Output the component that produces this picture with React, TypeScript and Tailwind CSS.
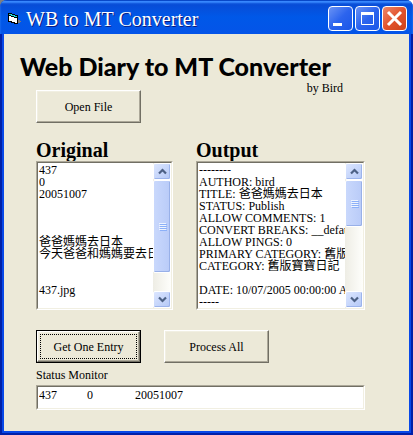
import { ReactNode } from "react";
import clsx from "clsx";

const originalText = `437
0
20051007



爸爸媽媽去日本
今天爸爸和媽媽要去日本


437.jpg`;

const outputText = `--------
AUTHOR: bird
TITLE: 爸爸媽媽去日本
STATUS: Publish
ALLOW COMMENTS: 1
CONVERT BREAKS: __default__
ALLOW PINGS: 0
PRIMARY CATEGORY: 舊版寶寶日記
CATEGORY: 舊版寶寶日記

DATE: 10/07/2005 00:00:00 AM
-----`;

const statusText = "437" + " ".repeat(10) + "0" + " ".repeat(14) + "20051007";

const sunken =
  "border border-t-[#aca899] border-l-[#aca899] border-r-white border-b-white bg-white";
const sunkenInner =
  "border border-t-[#716f64] border-l-[#716f64] border-r-[#f1efe2] border-b-[#f1efe2]";

const AppIcon = () => (
  <svg width="15" height="14" viewBox="0 0 15 14" shapeRendering="crispEdges">
    <path d="M11 8h2v1h1v1h-1v1h-2z" fill="#7b7b7b" />
    <path d="M1 1h4v1h3v1h3v9H7v-1H4v-1H1z" fill="#000" />
    <path d="M2 2h3v1h3v1h2v1H7V4H4V3H2z" fill="#1fd8d8" />
    <path d="M2 4h2v1h3v1h3v5H8v-1H5V9H2z" fill="#fff" />
  </svg>
);

const CaptionButton = ({
  label,
  close,
  children,
}: {
  label: string;
  close?: boolean;
  children: ReactNode;
}) => (
  <button
    type="button"
    aria-label={label}
    className={clsx(
      "flex size-[25px] items-center justify-center rounded-[4px] border border-white",
      close
        ? "bg-linear-to-br from-[#ec8668] via-[#e2522c] to-[#cc4218]"
        : "bg-linear-to-br from-[#6a92f4] via-[#2c64ee] to-[#1a56e8]"
    )}
  >
    <svg width="23" height="23" viewBox="0 0 23 23" fill="none">
      {children}
    </svg>
  </button>
);

const PushButton = ({
  children,
  focused,
}: {
  children: ReactNode;
  focused?: boolean;
}) => (
  <button
    type="button"
    className={clsx(
      "flex h-[33px] w-[105px] bg-[#ece9d8] text-xs",
      focused && "border border-black"
    )}
  >
    <span
      className={clsx(
        "flex size-full border border-t-white border-l-white border-r-[#716f64] border-b-[#716f64] shadow-[inset_-1px_-1px_0_#aca899,inset_1px_1px_0_#f1efe2]",
        focused && "p-[2px]"
      )}
    >
      <span
        className={clsx(
          "flex flex-1 items-center justify-center",
          focused && "border border-dotted border-black"
        )}
      >
        {children}
      </span>
    </span>
  </button>
);

const ScrollArrow = ({ down }: { down?: boolean }) => (
  <button
    type="button"
    aria-label={down ? "Scroll down" : "Scroll up"}
    className="flex h-[17px] w-full shrink-0 items-center justify-center rounded-[2px] border border-white bg-linear-to-br from-[#dce6ff] to-[#b4c8f6] shadow-[inset_-1px_-1px_0_#9cb4ec]"
  >
    <svg width="9" height="7" viewBox="0 0 9 7" fill="none">
      <path
        d={down ? "M1 1.5l3.5 3.5L8 1.5" : "M1 5.5L4.5 2L8 5.5"}
        stroke="#4d6185"
        strokeWidth="2.2"
      />
    </svg>
  </button>
);

const ScrollBar = ({ thumb }: { thumb: number }) => (
  <div className="flex w-[18px] shrink-0 flex-col bg-linear-to-r from-[#eeede5] to-[#fefefb]">
    <ScrollArrow />
    <div className="min-h-0 flex-1">
      <div
        style={{ height: `${thumb}%` }}
        className="flex flex-col items-center justify-center gap-px rounded-[2px] border border-white bg-linear-to-r from-[#c9d8fc] to-[#b9cbf8] shadow-[inset_-1px_-1px_0_#98b0e8]"
      >
        {[0, 1, 2, 3].map((i) => (
          <span
            key={i}
            className="h-px w-[7px] bg-[#eef4fe] shadow-[1px_1px_0_#8cb0f8]"
          />
        ))}
      </div>
    </div>
    <ScrollArrow down />
  </div>
);

const TextPanel = ({
  id,
  title,
  text,
  thumb,
}: {
  id: string;
  title: string;
  text: string;
  thumb: number;
}) => (
  <div className="flex min-w-0 flex-col">
    <label htmlFor={id} className="text-xl leading-[22px] font-bold">
      {title}
    </label>
    <div className={sunken}>
      <div className={clsx("flex", sunkenInner)}>
        <textarea
          id={id}
          rows={12}
          wrap="off"
          defaultValue={text}
          className="block min-w-0 flex-1 resize-none overflow-hidden pt-px pl-px text-xs leading-[12px] whitespace-pre outline-none"
        />
        <ScrollBar thumb={thumb} />
      </div>
    </div>
  </div>
);

const App = () => {
  return (
    <div className="bg-linear-to-r from-[#7f7f7f] to-white font-['Liberation_Serif','Noto_Sans_CJK_TC',serif] text-black">
      <div className="flex min-h-screen flex-col overflow-hidden rounded-t-[7px] bg-[#0842d8]">
        <header className="flex h-[34px] shrink-0 items-center justify-between bg-linear-to-b from-[#0a48d0] via-[#0058e8] to-[#0454e8] pt-[3px] pr-1.5 pl-[7px] shadow-[inset_0_1px_0_#0848c8,inset_0_3px_2px_#3a8cff]">
          <div className="flex items-center gap-1">
            <AppIcon />
            <h1 className="text-xl leading-6 text-white [text-shadow:1px_1px_0_#0a1c80]">
              WB to MT Converter
            </h1>
          </div>
          <div className="flex gap-0.5">
            <CaptionButton label="Minimize">
              <path d="M4 17.5h9" stroke="#fff" strokeWidth="3" />
            </CaptionButton>
            <CaptionButton label="Maximize">
              <path d="M5 6.5h13" stroke="#fff" strokeWidth="3" />
              <path d="M5.5 6v11.5h12V6" stroke="#fff" />
            </CaptionButton>
            <CaptionButton label="Close" close>
              <path d="M5 5l13 13M18 5L5 18" stroke="#fff" strokeWidth="3" />
            </CaptionButton>
          </div>
        </header>

        <div className="flex flex-1 border-x-2 border-b-2 border-[#0020a8] bg-[#0848e8] px-0.5 pb-0.5">
          <main className="flex flex-1 flex-col bg-[#ece9d8] pt-4 pr-11 pb-5 pl-8">
            <h2 className="-ml-4 font-['Lato',sans-serif] text-[25px] leading-8 font-black whitespace-nowrap">
              Web Diary to MT Converter
            </h2>
            <div className="flex items-start justify-between pr-[22px]">
              <div className="pt-2">
                <PushButton>Open File</PushButton>
              </div>
              <p className="text-xs leading-[12px]">by Bird</p>
            </div>

            <div className="mt-4 grid grid-cols-[137fr_169fr] gap-[23px]">
              <TextPanel
                id="original"
                title="Original"
                text={originalText}
                thumb={84}
              />
              <TextPanel
                id="output"
                title="Output"
                text={outputText}
                thumb={42}
              />
            </div>

            <div className="mt-5 flex gap-[23px]">
              <PushButton focused>Get One Entry</PushButton>
              <PushButton>Process All</PushButton>
            </div>

            <label htmlFor="status" className="mt-1 text-xs leading-4">
              Status Monitor
            </label>
            <div className={clsx("mt-0.5", sunken)}>
              <input
                id="status"
                type="text"
                defaultValue={statusText}
                className={clsx(
                  "block h-[23px] w-full pb-1 pl-px text-xs whitespace-pre outline-none",
                  sunkenInner
                )}
              />
            </div>
          </main>
        </div>
      </div>
    </div>
  );
};

export default App;
